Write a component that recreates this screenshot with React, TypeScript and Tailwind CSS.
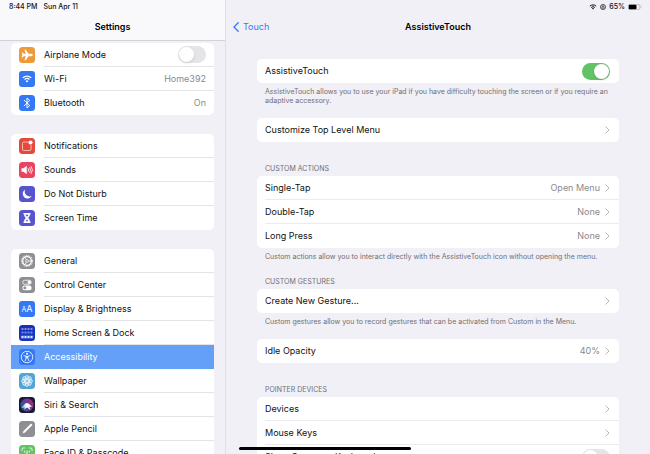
import React from 'react';

const iconClass = 'w-4 h-4 shrink-0';

const AirplaneIcon = () => (
  <svg viewBox="0 0 32 32" className={iconClass} aria-hidden="true">
    <rect width="32" height="32" rx="7" fill="#ef9a38" />
    <path d="M27.500 16c0-1.300-1.500-2.300-3-2.300h-5.500L13.500 5.500h-2.500l2.400 8.200H9.500L7.300 11H5.300L6.700 16l-1.400 5h2l2.200-2.700h3.900l-2.400 8.200h2.500l5.500-8.200h5.500c1.500 0 3-1 3-2.300z" fill="#fff" />
  </svg>
);

const WifiGlyph = ({ className, color }: { className: string; color: string }) => (
  <svg viewBox="5 7 22 18" className={className} aria-hidden="true">
    <g fill="none" stroke={color} strokeWidth="2.800">
      <path d="M6.500 13.500a13.500 13.500 0 0 1 19 0" />
      <path d="M10.500 17.500a7.800 7.800 0 0 1 11 0" />
    </g>
    <path d="M12.800 20.300a4.500 4.500 0 0 1 6.400 0L16 23.800z" fill={color} />
  </svg>
);

const WifiIcon = () => (
  <span className="w-4 h-4 shrink-0 flex items-center justify-center rounded-[3px] bg-[#3478f6]">
    <WifiGlyph className="w-[10px] h-2" color="#fff" />
  </span>
);

const BluetoothIcon = () => (
  <svg viewBox="0 0 32 32" className={iconClass} aria-hidden="true">
    <rect width="32" height="32" rx="7" fill="#3478f6" />
    <path d="M10.500 10.500l11 10.500L16 26V6l5.500 5L10.500 21.500" fill="none" stroke="#fff" strokeWidth="1.900" strokeLinejoin="round" strokeLinecap="round" />
  </svg>
);

const NotificationsIcon = () => (
  <svg viewBox="0 0 32 32" className={iconClass} aria-hidden="true">
    <rect width="32" height="32" rx="7" fill="#e5493d" />
    <path d="M18 8h-8.500A2.500 2.500 0 0 0 7 10.500v12A2.500 2.500 0 0 0 9.500 25h12a2.500 2.500 0 0 0 2.500-2.500V14" fill="none" stroke="#ffc4bb" strokeWidth="1.800" />
    <circle cx="23" cy="9" r="4.200" fill="#fff" />
  </svg>
);

const SoundsIcon = () => (
  <svg viewBox="0 0 32 32" className={iconClass} aria-hidden="true">
    <rect width="32" height="32" rx="7" fill="#eb4460" />
    <path d="M5 12.500h4l6.500-5v17l-6.500-5H5z" fill="#fff" />
    <g fill="none" stroke="#fff" strokeWidth="1.600" strokeLinecap="round">
      <path d="M18.500 13a5 5 0 0 1 0 6" />
      <path d="M21.500 11a8.500 8.500 0 0 1 0 10" />
      <path d="M24.500 9a12 12 0 0 1 0 14" />
    </g>
  </svg>
);

const MoonIcon = () => (
  <svg viewBox="0 0 32 32" className={iconClass} aria-hidden="true">
    <rect width="32" height="32" rx="7" fill="#5654cf" />
    <path d="M12.500 7A9.500 9.500 0 1 0 25.500 19.500 9.500 9.500 0 0 1 12.500 7z" fill="#fff" />
  </svg>
);

const HourglassIcon = () => (
  <svg viewBox="0 0 32 32" className={iconClass} aria-hidden="true">
    <rect width="32" height="32" rx="7" fill="#5654cf" />
    <path d="M9 6h14v3h-1.300c0 3.500-1.300 5-3.400 7 2.100 2 3.400 3.500 3.400 7H23v3H9v-3h1.300c0-3.500 1.300-5 3.400-7-2.100-2-3.400-3.500-3.400-7H9z" fill="#fff" />
    <path d="M13.500 9.500h5c-.5 2-1 3-2.500 4-1.500-1-2-2-2.500-4zM16 18.500l2.500 4h-5z" fill="#5654cf" />
  </svg>
);

const GearIcon = () => (
  <svg viewBox="0 0 32 32" className={iconClass} aria-hidden="true">
    <rect width="32" height="32" rx="7" fill="#8e8e93" />
    <circle cx="16" cy="16" r="10.800" fill="none" stroke="#fff" strokeWidth="2.200" strokeDasharray="1.700 1.700" />
    <circle cx="16" cy="16" r="8.600" fill="none" stroke="#fff" strokeWidth="2.600" />
    <circle cx="16" cy="16" r="2.800" fill="none" stroke="#fff" strokeWidth="1.500" />
    <path d="M19 16h5M14.500 13.500L11.700 8.600M14.500 18.500l-2.800 4.900" stroke="#fff" strokeWidth="1.500" />
  </svg>
);

const ControlCenterIcon = () => (
  <svg viewBox="0 0 32 32" className={iconClass} aria-hidden="true">
    <rect width="32" height="32" rx="7" fill="#8e8e93" />
    <rect x="7.500" y="6.500" width="17" height="8" rx="4" fill="none" stroke="#fff" strokeWidth="1.600" />
    <circle cx="20.500" cy="10.500" r="3.300" fill="#fff" />
    <rect x="6.700" y="17" width="18.600" height="9.500" rx="4.750" fill="#fff" />
    <circle cx="11.700" cy="21.750" r="2.900" fill="#8e8e93" />
  </svg>
);

const DisplayIcon = () => (
  <span className="w-4 h-4 shrink-0 rounded-[3px] bg-[#3478f6] text-white flex items-baseline justify-center leading-4" aria-hidden="true">
    <span className="text-[7px]">A</span>
    <span className="text-[9px]">A</span>
  </span>
);

const HomeScreenIcon = () => (
  <svg viewBox="0 0 32 32" className={iconClass} aria-hidden="true">
    <rect width="32" height="32" rx="7" fill="#1733b8" />
    <g fill="#6f93f8">
      <rect x="5" y="6" width="4" height="4" rx="1" />
      <rect x="11" y="6" width="4" height="4" rx="1" fill="#e0708c" />
      <rect x="17" y="6" width="4" height="4" rx="1" />
      <rect x="23" y="6" width="4" height="4" rx="1" />
      <rect x="5" y="13" width="4" height="4" rx="1" />
      <rect x="11" y="13" width="4" height="4" rx="1" />
      <rect x="17" y="13" width="4" height="4" rx="1" />
      <rect x="23" y="13" width="4" height="4" rx="1" />
    </g>
    <rect x="3.500" y="20.500" width="25" height="7" rx="2" fill="#4466d6" />
    <g fill="#dbe5ff">
      <rect x="5" y="22" width="4" height="4" rx="1" />
      <rect x="11" y="22" width="4" height="4" rx="1" />
      <rect x="17" y="22" width="4" height="4" rx="1" />
      <rect x="23" y="22" width="4" height="4" rx="1" />
    </g>
  </svg>
);

const AccessibilityIcon = () => (
  <svg viewBox="0 0 32 32" className={iconClass} aria-hidden="true">
    <rect width="32" height="32" rx="7" fill="#3478f6" />
    <circle cx="16" cy="16" r="11.500" fill="none" stroke="#fff" strokeWidth="1.600" />
    <circle cx="16" cy="9.700" r="2" fill="#fff" />
    <path d="M9.800 13.300l4.700 1v3.700l-2.300 5.700M22.200 13.300l-4.700 1v3.700l2.300 5.700M14.500 14.800h3v3h-3z" fill="none" stroke="#fff" strokeWidth="1.500" strokeLinecap="round" strokeLinejoin="round" />
  </svg>
);

const WallpaperIcon = () => (
  <svg viewBox="0 0 32 32" className={iconClass} aria-hidden="true">
    <rect width="32" height="32" rx="7" fill="#54a5d6" />
    <g fill="#ffffff50" stroke="#f0f9ff" strokeWidth="1.400">
      {[0, 45, 90, 135, 180, 225, 270, 315].map((angle) => (
        <ellipse key={angle} cx="16" cy="9.500" rx="3.400" ry="4.400" transform={`rotate(${angle} 16 16)`} />
      ))}
      <circle cx="16" cy="16" r="2.800" fill="#54a5d6" />
    </g>
  </svg>
);

const SiriIcon = () => (
  <svg viewBox="0 0 32 32" className={iconClass} aria-hidden="true">
    <defs>
      <linearGradient id="siri-wave" x1="0" y1="0" x2="1" y2="0">
        <stop offset="0" stopColor="#35b5e8" />
        <stop offset="0.450" stopColor="#ffffff" />
        <stop offset="0.700" stopColor="#e8f4ff" />
        <stop offset="1" stopColor="#e65394" />
      </linearGradient>
      <linearGradient id="siri-orb" x1="0" y1="0.600" x2="1" y2="0.200">
        <stop offset="0" stopColor="#2a5f9e" />
        <stop offset="0.500" stopColor="#6a3b8e" />
        <stop offset="1" stopColor="#a52f77" />
      </linearGradient>
    </defs>
    <rect width="32" height="32" rx="7" fill="#1b1b38" />
    <circle cx="16" cy="16" r="13" fill="url(#siri-orb)" />
    <path d="M4 21.500c5-2 6.500-9.500 12-9.500 4.500 0 7 5 12 7.500-3 .5-5 0-7 1l2 5.500-7-5-6 4 1.500-4c-2.500 0-4.500.500-7.500.500z" fill="url(#siri-wave)" />
  </svg>
);

const PencilIcon = () => (
  <svg viewBox="0 0 32 32" className={iconClass} aria-hidden="true">
    <rect width="32" height="32" rx="7" fill="#8e8e93" />
    <path d="M24.500 7.500L11 21" stroke="#fff" strokeWidth="4" strokeLinecap="round" />
    <path d="M9.600 19.600l2.800 2.800L7 25z" fill="#fff" />
  </svg>
);

const FaceIdIcon = () => (
  <svg viewBox="0 0 32 32" className={iconClass} aria-hidden="true">
    <rect width="32" height="32" rx="7" fill="#62c466" />
    <g fill="none" stroke="#fff" strokeWidth="1.700" strokeLinecap="round">
      <path d="M6 11V8.500A2.500 2.500 0 0 1 8.500 6H11M21 6h2.500A2.500 2.500 0 0 1 26 8.500V11M26 21v2.500a2.500 2.500 0 0 1-2.500 2.500H21M11 26H8.500A2.500 2.500 0 0 1 6 23.500V21" />
      <path d="M11.500 12v2.500M20.500 12v2.500M16.300 12v5.500H15M12 21c2.500 2 5.500 2 8 0" />
    </g>
  </svg>
);

const Chevron = () => (
  <svg viewBox="0 0 5 8" className="w-[5px] h-2 shrink-0" aria-hidden="true">
    <path d="M0.800 0.800L4 4L0.800 7.200" fill="none" stroke="#b8b8bd" strokeWidth="1" strokeLinecap="round" strokeLinejoin="round" />
  </svg>
);

const Switch = ({ id, on = false }: { id: string; on?: boolean }) => (
  <input
    id={id}
    type="checkbox"
    role="switch"
    defaultChecked={on}
    className="appearance-none flex items-center w-7 h-[17px] p-px shrink-0 rounded-full bg-[#e5e5e8] checked:bg-[#62c366] checked:justify-end before:content-[''] before:block before:w-[15px] before:h-[15px] before:rounded-full before:bg-white before:shadow-sm"
  />
);

type MenuItem = {
  label: string;
  icon: React.FC;
  value?: string;
  toggle?: boolean;
  selected?: boolean;
};

const menuGroups: MenuItem[][] = [
  [
    { label: 'Airplane Mode', icon: AirplaneIcon, toggle: true },
    { label: 'Wi-Fi', icon: WifiIcon, value: 'Home392' },
    { label: 'Bluetooth', icon: BluetoothIcon, value: 'On' },
  ],
  [
    { label: 'Notifications', icon: NotificationsIcon },
    { label: 'Sounds', icon: SoundsIcon },
    { label: 'Do Not Disturb', icon: MoonIcon },
    { label: 'Screen Time', icon: HourglassIcon },
  ],
  [
    { label: 'General', icon: GearIcon },
    { label: 'Control Center', icon: ControlCenterIcon },
    { label: 'Display & Brightness', icon: DisplayIcon },
    { label: 'Home Screen & Dock', icon: HomeScreenIcon },
    { label: 'Accessibility', icon: AccessibilityIcon, selected: true },
    { label: 'Wallpaper', icon: WallpaperIcon },
    { label: 'Siri & Search', icon: SiriIcon },
    { label: 'Apple Pencil', icon: PencilIcon },
    { label: 'Face ID & Passcode', icon: FaceIdIcon },
  ],
];

const MenuRow = ({ item, last }: { item: MenuItem; last: boolean }) => {
  const Icon = item.icon;
  const line = last || item.selected ? 'border-transparent' : 'border-[#e4e4e7]';
  const body = `flex flex-1 items-center justify-between h-6 pr-2 border-b ${line}`;

  if (item.toggle) {
    return (
      <div className="flex items-center gap-[9px] pl-2">
        <Icon />
        <div className={body}>
          <label htmlFor="airplane-mode">{item.label}</label>
          <Switch id="airplane-mode" />
        </div>
      </div>
    );
  }

  return (
    <a
      href="#"
      aria-current={item.selected ? 'page' : undefined}
      className={`flex items-center gap-[9px] pl-2 ${item.selected ? 'bg-[#64a0f8] text-white' : ''}`}
    >
      <Icon />
      <span className={body}>
        <span>{item.label}</span>
        {item.value && <span className="text-[#8a8a8e]">{item.value}</span>}
      </span>
    </a>
  );
};

const Card = ({ children }: { children: React.ReactNode }) => (
  <div className="rounded-[5px] bg-white pl-2 overflow-hidden divide-y divide-[#ebebee]">{children}</div>
);

const Row = ({ label, value }: { label: string; value?: string }) => (
  <button type="button" className="flex w-full h-6 items-center justify-between pr-[9px] text-left">
    <span>{label}</span>
    <span className="flex items-center gap-[5px] text-[#8a8a8e]">
      {value}
      <Chevron />
    </span>
  </button>
);

const SwitchRow = ({ id, label, on }: { id: string; label: string; on?: boolean }) => (
  <div className="flex h-6 items-center justify-between pr-[9px]">
    <label htmlFor={id}>{label}</label>
    <Switch id={id} on={on} />
  </div>
);

const SectionTitle = ({ children }: { children: React.ReactNode }) => (
  <h2 className="px-2 pb-[3px] text-[7px] leading-[9px] text-[#6f6f74] uppercase">{children}</h2>
);

const Note = ({ children }: { children: React.ReactNode }) => (
  <p className="px-2 pt-1 text-[7px] leading-[9px] text-[#6f6f74]">{children}</p>
);

const App: React.FC = () => {
  return (
    <div className="relative flex h-screen overflow-hidden bg-[#f1f0f6] font-['Inter','Liberation_Sans',sans-serif] text-[9px] leading-3 text-[#111]">
      {/* Sidebar */}
      <aside className="flex flex-col w-[226px] shrink-0 border-r border-[#dedee3]">
        <header className="shrink-0 h-[41px] border-b border-[#d2d2d7] bg-[#f9f9fb]">
          <div className="flex gap-[6px] pl-[9px] pt-[2px] text-[7px] leading-[9px] font-medium">
            <span>8:44 PM</span>
            <span>Sun Apr 11</span>
          </div>
          <h1 className="pt-[10px] text-center font-semibold text-black">Settings</h1>
        </header>
        <nav className="flex flex-col gap-[19px] min-h-0 overflow-y-auto [scrollbar-width:none] pt-[2px] px-[11px]">
          {menuGroups.map((group, index) => (
            <div key={index} className="shrink-0 rounded-[5px] bg-white overflow-hidden">
              {group.map((item, i) => (
                <MenuRow key={item.label} item={item} last={i === group.length - 1} />
              ))}
            </div>
          ))}
        </nav>
      </aside>

      {/* Detail pane */}
      <main className="flex flex-col flex-1 min-w-0">
        <header className="shrink-0 h-[41px]">
          <div className="flex items-center justify-end gap-[3px] pr-2 pt-[2px] text-[7px] leading-[9px] font-medium">
            <WifiGlyph className="w-2 h-[6px]" color="#000" />
            <svg viewBox="0 0 14 14" className="w-[6px] h-[6px]" aria-hidden="true">
              <circle cx="7" cy="7" r="6" fill="none" stroke="#222" strokeWidth="1.700" />
              <path d="M4.500 6.500h5v3.500h-5zM5.500 6.500V5a1.500 1.500 0 0 1 3 0v1.500" fill="none" stroke="#222" strokeWidth="1.300" />
            </svg>
            <span>65%</span>
            <svg viewBox="0 0 28 12" className="w-[14px] h-[6px]" aria-hidden="true">
              <rect x="0.700" y="0.700" width="23" height="10.600" rx="3" fill="none" stroke="#9c9ca1" strokeWidth="1.200" />
              <rect x="1.500" y="1.500" width="15.500" height="9" rx="2" fill="#000" />
              <path d="M25.500 4a2.500 2.500 0 0 1 0 4z" fill="#9c9ca1" />
            </svg>
          </div>
          <div className="grid grid-cols-3 items-center pt-[10px]">
            <a href="#" className="flex items-center gap-1 pl-[7px] text-[#3478f6]">
              <svg viewBox="0 0 6 10" className="w-[6px] h-[10px]" aria-hidden="true">
                <path d="M5.200 0.700L1 5L5.200 9.300" fill="none" stroke="#3478f6" strokeWidth="1.300" strokeLinecap="round" strokeLinejoin="round" />
              </svg>
              Touch
            </a>
            <h1 className="text-center font-semibold text-black">AssistiveTouch</h1>
          </div>
        </header>

        <div className="min-h-0 overflow-y-auto [scrollbar-width:none] px-[31px] pt-[18px]">
          <section>
            <Card>
              <SwitchRow id="assistive-touch" label="AssistiveTouch" on />
            </Card>
            <Note>
              AssistiveTouch allows you to use your iPad if you have difficulty touching the screen or if you require an adaptive accessory.
            </Note>
          </section>

          <section className="pt-[13px]">
            <Card>
              <Row label="Customize Top Level Menu" />
            </Card>
          </section>

          <section className="pt-[22px]">
            <SectionTitle>Custom Actions</SectionTitle>
            <Card>
              <Row label="Single-Tap" value="Open Menu" />
              <Row label="Double-Tap" value="None" />
              <Row label="Long Press" value="None" />
            </Card>
            <Note>Custom actions allow you to interact directly with the AssistiveTouch icon without opening the menu.</Note>
          </section>

          <section className="pt-4">
            <SectionTitle>Custom Gestures</SectionTitle>
            <Card>
              <Row label="Create New Gesture..." />
            </Card>
            <Note>Custom gestures allow you to record gestures that can be activated from Custom in the Menu.</Note>
          </section>

          <section className="pt-[13px]">
            <Card>
              <Row label="Idle Opacity" value="40%" />
            </Card>
          </section>

          <section className="pt-[22px]">
            <SectionTitle>Pointer Devices</SectionTitle>
            <Card>
              <Row label="Devices" />
              <Row label="Mouse Keys" />
              <SwitchRow id="onscreen-keyboard" label="Show Onscreen Keyboard" />
            </Card>
          </section>
        </div>
      </main>

      {/* Home indicator */}
      <div className="absolute bottom-1 left-1/2 -translate-x-1/2 w-[172px] h-[3px] rounded-full bg-black" />
    </div>
  );
};

export default App;
